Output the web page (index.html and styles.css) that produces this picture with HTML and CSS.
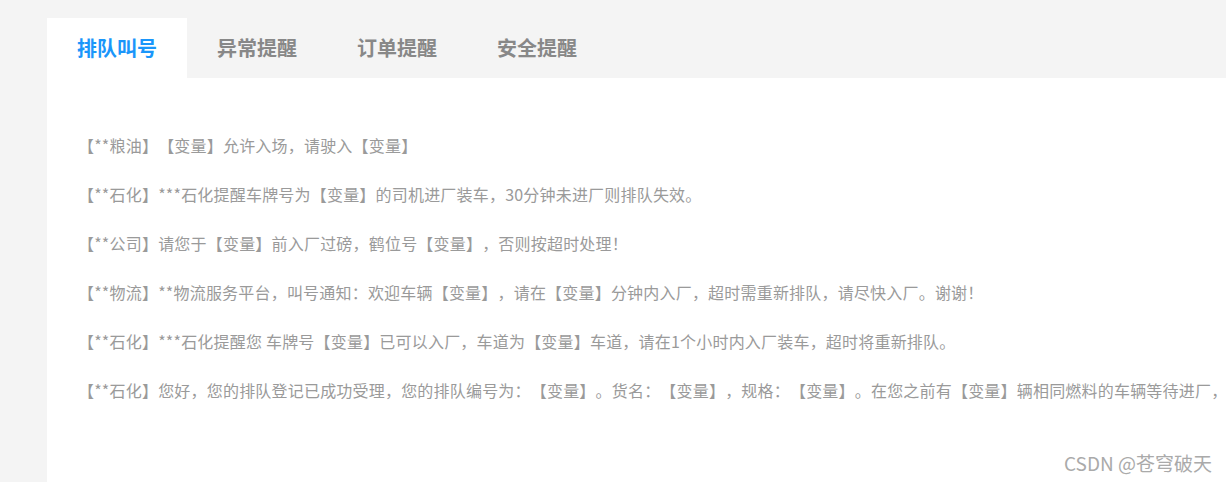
FILE: index.html
```html
<!DOCTYPE html>
<html lang="zh-CN">
  <head>
    <meta charset="UTF-8" />
    <meta name="viewport" content="width=device-width, initial-scale=1.0" />
    <title>消息提醒</title>
    <link rel="stylesheet" href="styles.css">
  </head>
  <body>
    <div class="panel">
      <ul class="tabs">
        <li class="tab active">排队叫号</li>
        <li class="tab">异常提醒</li>
        <li class="tab">订单提醒</li>
        <li class="tab">安全提醒</li>
      </ul>
      <div class="tab-content">
        <p>【**粮油】【变量】允许入场，请驶入【变量】</p>
        <p>【**石化】***石化提醒车牌号为【变量】的司机进厂装车，30分钟未进厂则排队失效。</p>
        <p>【**公司】请您于【变量】前入厂过磅，鹤位号【变量】，否则按超时处理！</p>
        <p>【**物流】**物流服务平台，叫号通知：欢迎车辆【变量】，请在【变量】分钟内入厂，超时需重新排队，请尽快入厂。谢谢！</p>
        <p>【**石化】***石化提醒您 车牌号【变量】已可以入厂，车道为【变量】车道，请在1个小时内入厂装车，超时将重新排队。</p>
        <p>【**石化】您好，您的排队登记已成功受理，您的排队编号为：【变量】。货名：【变量】，规格：【变量】。在您之前有【变量】辆相同燃料的车辆等待进厂，</p>
      </div>
    </div>
    <div class="watermark">CSDN @苍穹破天</div>
  </body>
</html>
```

FILE: styles.css
```css
* {
  margin: 0;
  padding: 0;
  box-sizing: border-box;
}

body {
  font-family: "Noto Sans CJK SC", "Noto Sans", sans-serif;
  background-color: #f4f4f4;
  height: 100vh;
  overflow: hidden;
  padding: 18px 0 0 47px;
  display: flex;
  flex-direction: column;
}

.panel {
  flex: 1;
  display: flex;
  flex-direction: column;
}

.tabs {
  list-style: none;
  display: flex;
  height: 60px;
}

.tab {
  padding: 0 30px;
  line-height: 60px;
  font-size: 20px;
  font-weight: bold;
  color: #888;
}

.tab.active {
  background: #fff;
  color: #1a96fa;
}

.tab-content {
  flex: 1;
  background: #fff;
  padding: 56px 0 0 31px;
  overflow: hidden;
}

.tab-content p {
  font-size: 16px;
  line-height: 22px;
  color: #9a9a9a;
  white-space: nowrap;
  margin-bottom: 27px;
  letter-spacing: 0.2px;
  text-spacing-trim: space-all;
}

.watermark {
  position: absolute;
  right: 14px;
  bottom: 6px;
  font-size: 19px;
  color: #aaa;
  text-shadow: 1px 1px 1px #fff;
}
```
